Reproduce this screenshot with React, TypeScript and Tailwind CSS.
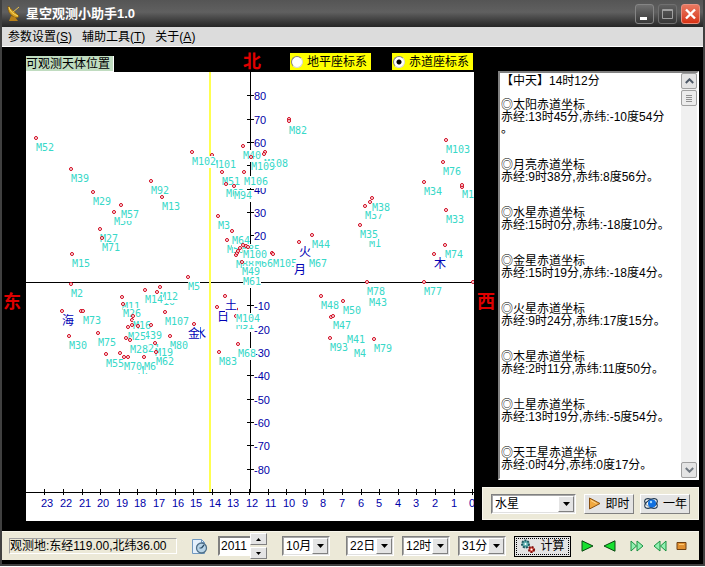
import React from 'react';

type SkyObject = [name: string, x: number, y: number, hideMark?: boolean];

// chart size in user units, x = 0 is 24h, y = 0 is +90 deg
const CHART_W = 448;
const CHART_H = 449;
const EQUATOR = 210;
const MERIDIAN = 224;
const BASE = 420;

// drawn in order, later labels cover the earlier ones; '' is a mark without a label
const OBJECTS: SkyObject[] = [
  ['M52', 10, 66], ['M39', 45, 97], ['M29', 67, 120], ['M92', 125, 109],
  ['M56', 88, 140], ['M57', 95, 133], ['', 136, 125], ['M13', 136, 125, true],
  ['M27', 74, 157], ['M71', 76, 166], ['M15', 46, 182], ['M2', 45, 212],
  ['M5', 162, 205], ['M10', 131, 220], ['M12', 134, 215], ['M14', 119, 218],
  ['M11', 96, 225], ['M26', 97, 232], ['M107', 139, 240], ['', 55, 239],
  ['M73', 57, 239], ['M30', 43, 264], ['M75', 72, 261], ['M80', 144, 264],
  ['', 106, 248], ['M16', 107, 244], ['', 106, 253], ['', 125, 253],
  ['439', 118, 254, true], ['', 112, 254], ['M25', 102, 255], ['M21', 116, 267, true],
  ['', 100, 266], ['M28', 104, 268], ['M7', 112, 289, true], ['M55', 80, 282],
  ['', 94, 281], ['', 98, 285], ['M6', 118, 285], ['', 102, 285],
  ['M70', 98, 285, true], ['M19', 129, 271], ['M62', 130, 280], ['M101', 186, 83],
  ['M102', 166, 80], ['M40', 217, 74], ['', 239, 80], ['M108', 238, 82],
  ['M109', 225, 85], ['M51', 196, 100], ['M106', 218, 100], ['M63', 200, 112],
  ['M94', 208, 114], ['M3', 192, 144], ['M53', 201, 168], ['M85', 216, 168],
  ['M64', 206, 159], ['M88', 210, 183], ['', 211, 181], ['', 212, 179],
  ['', 214, 176], ['', 246, 181], ['M66', 229, 182, true], ['M49', 216, 190],
  ['M100', 217, 173], ['', 220, 174], ['', 222, 175], ['M105', 247, 182],
  ['M44', 286, 163], ['M67', 283, 182], ['', 263, 47], ['M82', 263, 49],
  ['M61', 217, 200, true], ['M91', 210, 244], ['M104', 210, 237], ['M68', 212, 272],
  ['M83', 193, 280], ['M103', 420, 68], ['M76', 417, 90], ['M34', 398, 110],
  ['', 436, 115], ['M1', 436, 113], ['M33', 420, 138], ['M74', 419, 173],
  ['M37', 339, 134], ['', 344, 130], ['M38', 346, 126], ['M1', 343, 162, true],
  ['M35', 334, 153], ['M43', 343, 221, true], ['M78', 341, 210], ['M77', 398, 210],
  ['M48', 295, 224], ['M50', 317, 229], ['', 305, 245], ['M47', 307, 244],
  ['M93', 304, 266], ['M4', 328, 272, true], ['M41', 321, 258, true], ['M79', 348, 267],
];

const PLANETS: SkyObject[] = [
  ['海', 36, 239], ['水', 168, 252], ['金', 162, 252, true], ['日', 191, 235],
  ['土', 199, 224], ['火', 273, 170], ['月', 268, 188, true], ['木', 408, 182],
  ['', 447, 210],
];

const DEGREES = [80, 70, 60, 50, 40, 30, 20, 10, -10, -20, -30, -40, -50, -60, -70, -80];
const HOURS = Array.from({ length: 24 }, (_, h) => h);

const REPORT = `【中天】14时12分

◎太阳赤道坐标
赤经:13时45分,赤纬:-10度54分
。


◎月亮赤道坐标
赤经:9时38分,赤纬:8度56分。


◎水星赤道坐标
赤经:15时0分,赤纬:-18度10分。


◎金星赤道坐标
赤经:15时19分,赤纬:-18度4分。


◎火星赤道坐标
赤经:9时24分,赤纬:17度15分。


◎木星赤道坐标
赤经:2时11分,赤纬:11度50分。


◎土星赤道坐标
赤经:13时19分,赤纬:-5度54分。


◎天王星赤道坐标
赤经:0时4分,赤纬:0度17分。`;

const degreeY = (d: number) => Math.round(EQUATOR - d * 2.335);
const hourX = (h: number) => MERIDIAN + Math.round((12 - h) * 18.6);

const SkyChart: React.FC = () => {
  return (
    <svg viewBox={`0 0 ${CHART_W} ${CHART_H}`} className="block w-full bg-white" role="img" aria-label="可观测天体位置">
      <g stroke="#000" shapeRendering="crispEdges">
        <line x1={0} y1={EQUATOR + 0.5} x2={CHART_W} y2={EQUATOR + 0.5} />
        <line x1={0} y1={BASE + 0.5} x2={CHART_W} y2={BASE + 0.5} />
        <line x1={MERIDIAN + 0.5} y1={0} x2={MERIDIAN + 0.5} y2={BASE} />
        {DEGREES.map(d => (
          <line key={d} x1={MERIDIAN - 3} y1={degreeY(d) + 0.5} x2={MERIDIAN + 4} y2={degreeY(d) + 0.5} />
        ))}
        {HOURS.map(h => (
          <line key={h} x1={hourX(h) - 0.5} y1={BASE - 3} x2={hourX(h) - 0.5} y2={BASE + 3} />
        ))}
      </g>
      <rect x={183} y={0} width={2} height={BASE} fill="#ffff50" shapeRendering="crispEdges" />

      <g fill="#0000a8" className="font-['Liberation_Sans',sans-serif] text-[11px]">
        {DEGREES.filter(d => d !== 50 && d !== 10).map(d => (
          <text key={d} x={MERIDIAN + 4} y={degreeY(d) + 5}>{d}</text>
        ))}
        {HOURS.map(h => (
          <text key={h} x={hourX(h) - 4} y={435}>{h}</text>
        ))}
      </g>

      <g className="font-['DejaVu_Sans_Mono',monospace] text-[10px]">
        {OBJECTS.map(([name, x, y, hideMark], i) => (
          <g key={i}>
            {!hideMark && <circle cx={x} cy={y} r={1.5} fill="#fff" stroke="#d00018" />}
            {name && <rect x={x} y={y + 4} width={name.length * 6} height={12} fill="#fff" />}
            {name && <text x={x} y={y + 13} fill="#38d8c8">{name}</text>}
          </g>
        ))}
      </g>

      <g className="font-['Noto_Sans_CJK_SC',sans-serif] text-[12px]">
        {PLANETS.map(([name, x, y, hideMark], i) => (
          <g key={i}>
            {!hideMark && <circle cx={x} cy={y} r={1.5} fill="#fff" stroke="#d00018" />}
            {name && <rect x={x} y={y + 3} width={12} height={13} fill="#fff" />}
            {name && <text x={x} y={y + 14} fill="#0000b4">{name}</text>}
          </g>
        ))}
      </g>
    </svg>
  );
};

const Combo: React.FC<{ label: string; value: string; className: string }> = ({ label, value, className }) => (
  <div className={`relative h-5 border border-t-[#808080] border-l-[#808080] border-r-white border-b-white ${className}`}>
    <select aria-label={label} defaultValue={value} className="block w-full h-full appearance-none bg-white pl-0.5 border border-t-[#a8a8a8] border-l-[#a8a8a8] border-r-[#e0e0e0] border-b-[#e0e0e0] text-[12px] leading-4 outline-none">
      <option>{value}</option>
    </select>
    <span className="absolute top-px right-px bottom-px w-4 pointer-events-none flex items-center justify-center bg-[#e4e4e4] border border-t-white border-l-white border-r-[#808080] border-b-[#808080]">
      <svg width="7" height="4" viewBox="0 0 7 4"><path d="M0 0h7L3.5 4z" /></svg>
    </span>
  </div>
);

const Radio: React.FC<{ label: string; checked?: boolean }> = ({ label, checked }) => (
  <label className="flex items-center gap-1 w-[81px] h-[17px] pl-px bg-[#ffff00] whitespace-nowrap">
    <input
      type="radio"
      name="system"
      defaultChecked={checked}
      className="appearance-none w-3 h-3 shrink-0 rounded-full bg-white border border-t-[#808080] border-l-[#808080] border-r-[#d8d8d8] border-b-[#d8d8d8] checked:bg-[radial-gradient(circle,#000_2px,#fff_3px)]"
    />
    {label}
  </label>
);

const RAISED = 'bg-[#e4e4e4] border border-t-white border-l-white border-r-[#808080] border-b-[#808080]';

const App: React.FC = () => {
  return (
    <div className="bg-black border-x-2 border-b-2 border-[#404040] overflow-hidden font-['Liberation_Sans','Noto_Sans_CJK_SC',sans-serif] text-[12px] leading-4 text-black">
      {/* Title bar */}
      <header className="flex items-center h-[27px] pl-1 pr-[3px] bg-linear-to-b from-[#555] via-[#606060] via-45% to-[#262626]">
        <svg width="16" height="17" viewBox="0 0 16 17" className="mr-1">
          <path d="M2 1 13 11Q12 14 8 12Q1 8 2 1Z" fill="#d6a020" stroke="#79500c" strokeWidth=".7" />
          <path d="M3 2Q4 8 12 11" fill="none" stroke="#f8da68" />
          <path d="M7 7 13 2" stroke="#e8c050" />
          <path d="M5 11 3 16h9l-3-4z" fill="#b98018" />
        </svg>
        <h1 className="flex-1 text-[13px] font-bold text-white">星空观测小助手1.0</h1>
        <div className="flex gap-1">
          <button aria-label="最小化" className="w-[19px] h-5 rounded-[3px] border border-[#858585] bg-linear-to-b from-[#707070] to-[#383838]">
            <svg width="17" height="18" viewBox="0 0 17 18"><path d="M4 12h7v3H4z" fill="#fff" /></svg>
          </button>
          <button aria-label="最大化" className="w-[19px] h-5 rounded-[3px] border border-[#707070] bg-linear-to-b from-[#606060] to-[#383838]">
            <svg width="17" height="18" viewBox="0 0 17 18"><path d="M3.5 4.5h10v9h-10zM3 5.5h11" fill="none" stroke="#a0a0a0" /></svg>
          </button>
          <button aria-label="关闭" className="w-[19px] h-5 rounded-[3px] border border-[#e89080] bg-linear-to-b from-[#e87860] to-[#d83010]">
            <svg width="17" height="18" viewBox="0 0 17 18"><path d="m4 4.500 9 9m0-9-9 9" stroke="#fff" strokeWidth="2.4" /></svg>
          </button>
        </div>
      </header>

      {/* Menu */}
      <nav className="flex items-center gap-2.5 h-5 px-1.5 bg-[#dcdcdc] border-b border-white">
        <button>参数设置(<u>S</u>)</button>
        <button>辅助工具(<u>T</u>)</button>
        <button>关于(<u>A</u>)</button>
      </nav>

      <main className="flex pr-1">
        <div className="flex items-center justify-center w-6 shrink-0 pt-9 pr-1 text-lg font-bold text-[#e00000]">东</div>

        <section className="flex-1 min-w-0">
          <div className="flex items-start h-[25px] pt-1.5">
            <h2 className="w-[88px] h-4 mt-[3px] bg-[#c0dcc0] border-r border-b border-white whitespace-nowrap">可观测天体位置</h2>
            <span className="ml-auto mr-[29px] text-lg leading-[18px] font-bold text-[#e00000]">北</span>
            <div className="flex gap-[21px]">
              <Radio label="地平座标系" />
              <Radio label="赤道座标系" checked />
            </div>
            <span className="w-px" />
          </div>
          <SkyChart />
        </section>

        <div className="flex items-center justify-center w-6 shrink-0 pt-9 text-lg font-bold text-[#e00000]">西</div>

        <aside className="flex flex-col gap-[7px] w-[201px] shrink-0 pt-6">
          <div className="flex flex-1 bg-white border-2 border-t-[#808080] border-l-[#808080] border-r-white border-b-white">
            <textarea aria-label="天体坐标" readOnly defaultValue={REPORT} className="flex-1 min-w-0 resize-none overflow-hidden pl-px pt-0.5 leading-3 whitespace-pre outline-none" />
            <div className="flex flex-col w-4 bg-[#f0f0f0]">
              <button aria-label="向上" className="flex items-center justify-center h-4 rounded-[2px] bg-[#e4e4e4] border border-[#a0a0a0]">
                <svg width="9" height="6" viewBox="0 0 9 6"><path d="m.8 5 3.700-3.700L8.200 5" fill="none" stroke="#4d5866" strokeWidth="2" /></svg>
              </button>
              <button aria-label="滚动" className="flex items-center justify-center h-4 mt-px rounded-[2px] bg-[#ececec] border border-[#a0a0a0]">
                <svg width="6" height="7" viewBox="0 0 6 7"><path d="M0 .5h6M0 2.500h6M0 4.500h6M0 6.500h6" stroke="#909090" /></svg>
              </button>
              <button aria-label="向下" className="flex items-center justify-center h-4 mt-auto rounded-[2px] bg-[#e4e4e4] border border-[#a0a0a0]">
                <svg width="9" height="6" viewBox="0 0 9 6"><path d="m.8 1 3.700 3.700L8.200 1" fill="none" stroke="#707880" strokeWidth="2" /></svg>
              </button>
            </div>
          </div>
          <div className="flex items-center h-[33px] -ml-4 mb-px px-2 bg-[#ece9d8] border border-[#f8f6ec]">
            <Combo label="行星" value="水星" className="flex-1" />
            <button className={`flex items-center justify-center gap-1 w-[50px] h-5 ml-2 whitespace-nowrap ${RAISED}`}>
              <svg width="13" height="13" viewBox="0 0 13 13">
                <path d="M1.500 1 12 6.500 1.500 12z" fill="#f0a840" stroke="#8a5010" />
                <path d="M3 3.500 8.500 6.500" stroke="#ffd890" />
              </svg>
              即时
            </button>
            <button className={`flex items-center justify-center gap-1 w-[50px] h-5 ml-1.5 whitespace-nowrap ${RAISED}`}>
              <svg width="16" height="13" viewBox="0 0 16 13">
                <g fill="#fff" fillOpacity=".6" stroke="#203850" strokeWidth="1.200">
                  <ellipse cx="8" cy="6.500" rx="7" ry="3.800" transform="rotate(30 8 6.500)" />
                  <ellipse cx="8" cy="6.500" rx="7" ry="3.800" transform="rotate(-30 8 6.500)" />
                </g>
                <circle cx="9" cy="6.500" r="4" fill="#1070e0" />
                <circle cx="8" cy="5" r="1.200" fill="#a0d8ff" />
              </svg>
              一年
            </button>
          </div>
        </aside>
      </main>

      {/* Bottom toolbar */}
      <footer className="flex items-center h-[29px] mt-2.5 mr-1 mb-1 pl-[7px] pr-3 bg-[#ece9d8] border-t border-[#f8f6ec]">
        <output className="w-[168px] h-4 shrink-0 leading-[14px] border border-t-[#a0a0a0] border-l-[#a0a0a0] border-r-white border-b-white whitespace-nowrap">观测地:东经119.00,北纬36.00</output>
        <button aria-label="当前时间" className="ml-3.5">
          <svg width="17" height="17" viewBox="0 0 17 17">
            <path d="M1.500 1.500h9l3 3v11h-12z" fill="#e4f0fc" stroke="#7098c0" />
            <path d="M10.500 1.500v3h3" fill="none" stroke="#7098c0" />
            <circle cx="10.500" cy="10" r="5" fill="#b8d4e8" stroke="#507088" strokeWidth="1.300" />
            <path d="m10.500 10 2.500-3M10.500 10h-2" stroke="#284860" strokeWidth="1.200" />
          </svg>
        </button>
        <div className="flex items-center ml-2.5">
          <input aria-label="年" defaultValue="2011" className="w-8 h-5 pl-px bg-white border-2 border-r-0 border-t-[#808080] border-l-[#808080] border-b-white outline-none" />
          <div className="flex flex-col gap-0.5 w-[17px]">
            <button aria-label="增加" className={`flex items-center justify-center h-3 ${RAISED}`}>
              <svg width="5" height="3" viewBox="0 0 5 3"><path d="M0 3h5L2.500 0z" /></svg>
            </button>
            <button aria-label="减少" className={`flex items-center justify-center h-3 ${RAISED}`}>
              <svg width="5" height="3" viewBox="0 0 5 3"><path d="M0 0h5L2.500 3z" /></svg>
            </button>
          </div>
        </div>
        <Combo label="月" value="10月" className="w-12 ml-[15px]" />
        <Combo label="日" value="22日" className="w-12 ml-4" />
        <Combo label="时" value="12时" className="w-12 ml-2" />
        <Combo label="分" value="31分" className="w-12 ml-2" />
        <button className="w-[57px] h-[21px] ml-2 p-px bg-[#e4e4e4] border border-black whitespace-nowrap">
          <span className="flex items-center justify-center gap-1 h-full border border-dotted border-black">
            <svg width="16" height="15" viewBox="0 0 16 15">
              <circle cx="5.500" cy="5" r="3.500" fill="#60b0b0" stroke="#205860" strokeWidth="2" strokeDasharray="2 1" />
              <circle cx="5.500" cy="5" r="1" fill="#fff" />
              <circle cx="11.500" cy="10.500" r="2.600" fill="#e05040" stroke="#801010" strokeWidth="2" strokeDasharray="2 1" />
              <circle cx="11.500" cy="10.500" r="1" fill="#fff" />
            </svg>
            计算
          </span>
        </button>
        <div className="flex flex-1 items-center justify-between ml-2.5">
          <button aria-label="前进">
            <svg width="13" height="12" viewBox="0 0 13 12"><path d="M1 .8 12 6 1 11.200z" fill="#18e030" stroke="#084810" /></svg>
          </button>
          <button aria-label="后退">
            <svg width="13" height="12" viewBox="0 0 13 12"><path d="M12 .8 1 6l11 5.200z" fill="#18e030" stroke="#084810" /></svg>
          </button>
          <button aria-label="快进" className="ml-1">
            <svg width="14" height="12" viewBox="0 0 14 12"><path d="M1 1v10l5.500-5zM7 1v10l6-5z" fill="#90f0b0" stroke="#189040" /></svg>
          </button>
          <button aria-label="快退">
            <svg width="14" height="12" viewBox="0 0 14 12"><path d="M13 1v10L7.500 6zM7 1v10L1 6z" fill="#90f0b0" stroke="#189040" /></svg>
          </button>
          <button aria-label="停止">
            <svg width="11" height="10" viewBox="0 0 11 10"><path d="M1 1.500h9v7H1z" fill="#e09030" stroke="#704010" /><path d="M3 3.500h5" stroke="#ffc870" /></svg>
          </button>
        </div>
      </footer>
    </div>
  );
};

export default App;
